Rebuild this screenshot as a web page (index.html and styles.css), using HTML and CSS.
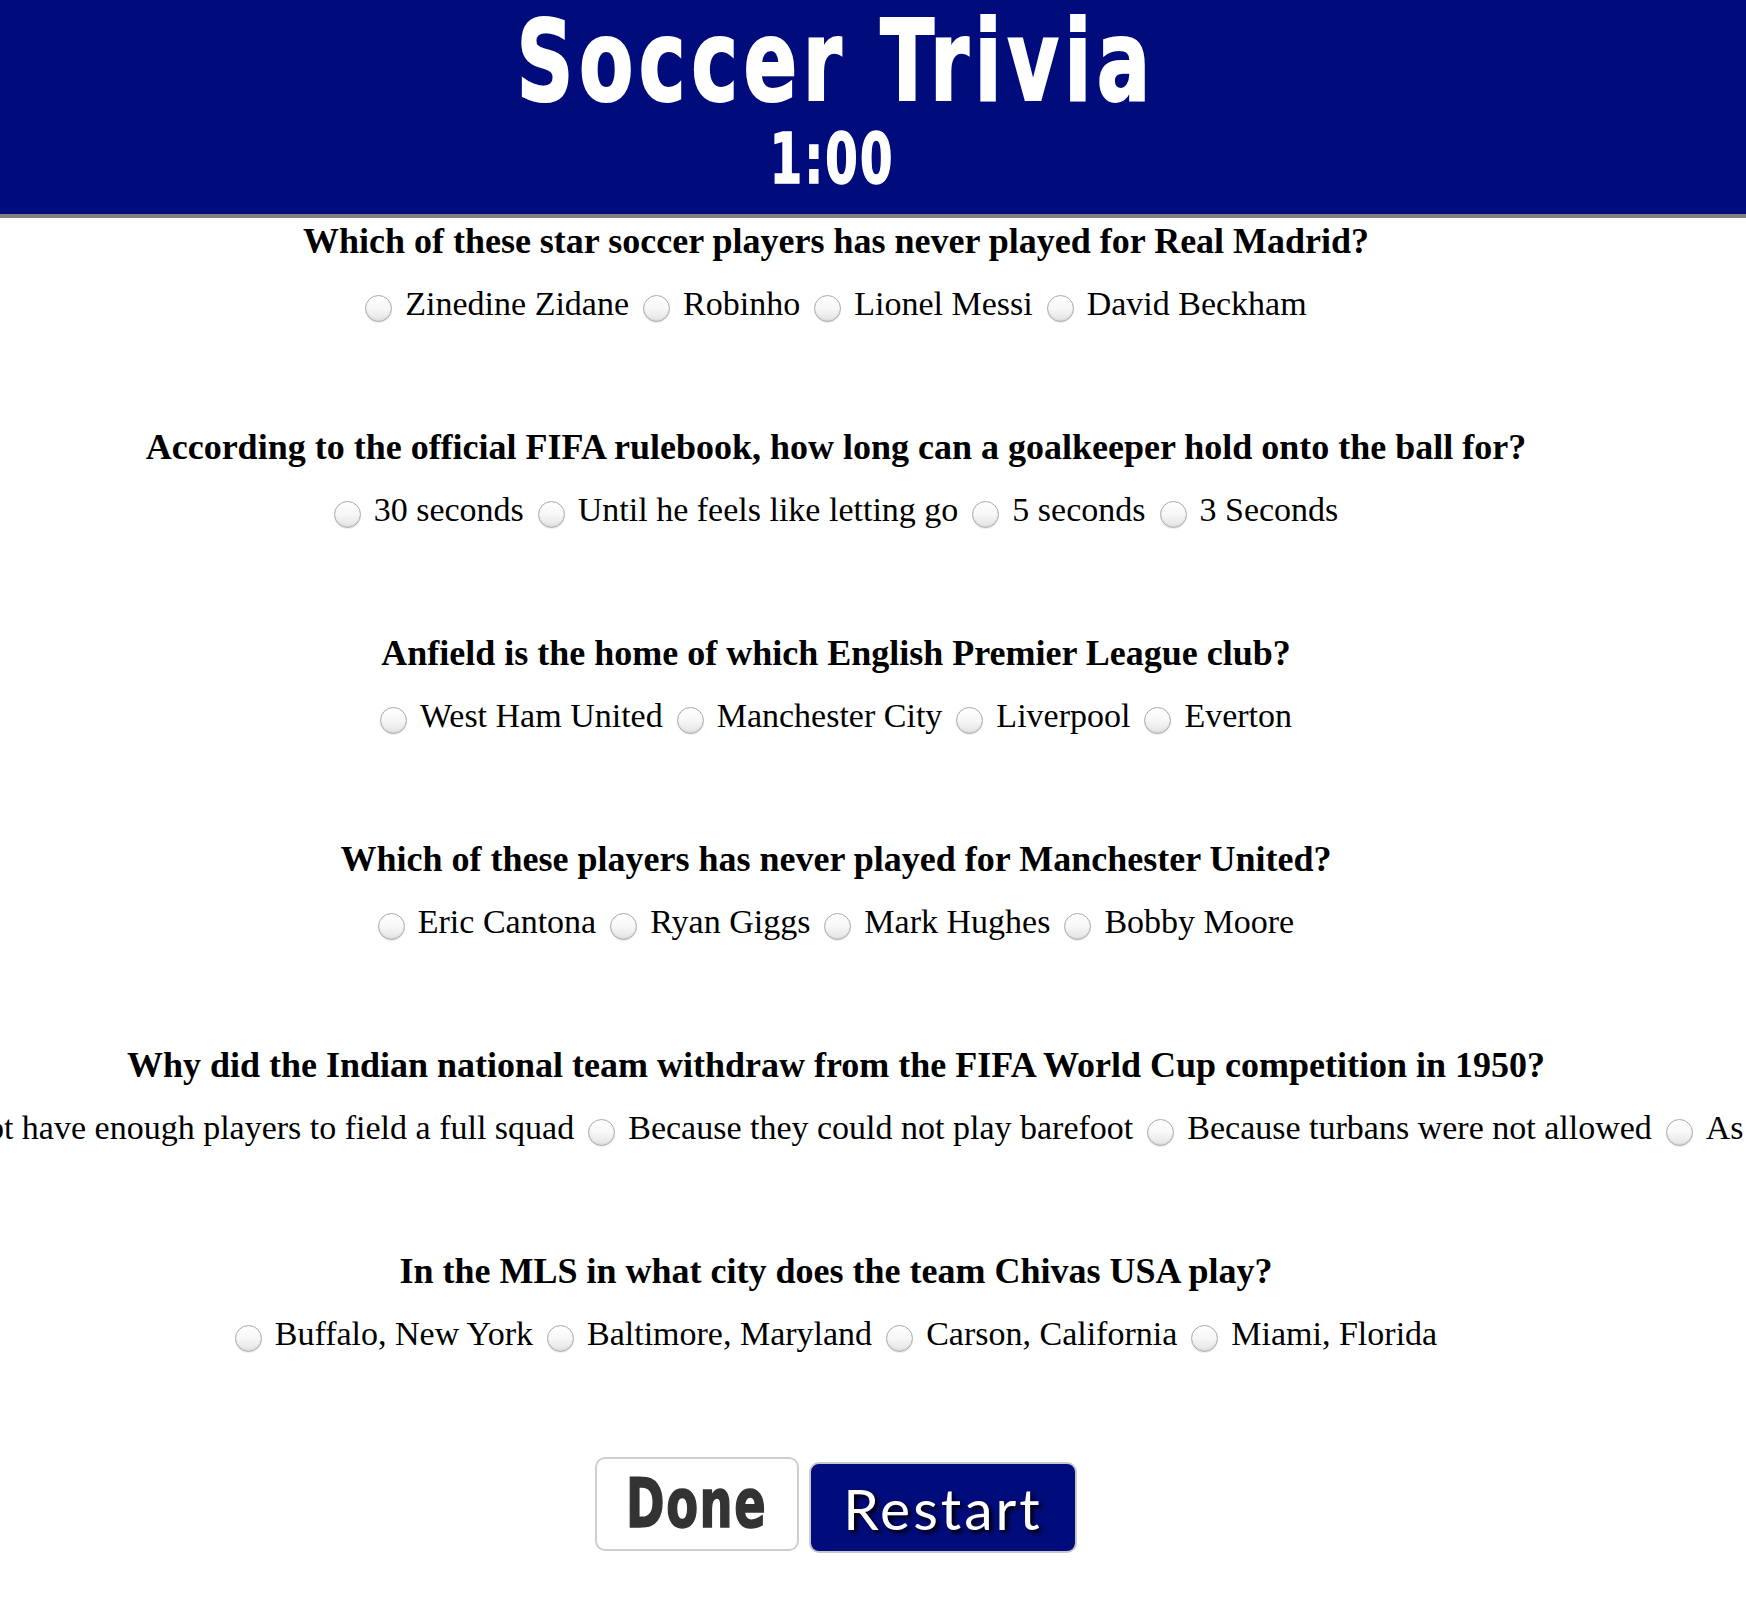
FILE: index.html
```html
<!DOCTYPE html>
<html lang="en">
<head>
<meta charset="utf-8">
<title>Soccer Trivia</title>
<link rel="stylesheet" href="styles.css">
</head>
<body>
<header class="header">
  <div class="header-inner">
    <h1 class="title">Soccer Trivia</h1>
    <div class="timer">1:00</div>
  </div>
</header>
<main class="quiz">
  <section class="question">
    <h2 class="q-text">Which of these star soccer players has never played for Real Madrid?</h2>
    <div class="options">
      <label class="opt"><input type="radio" name="q1" class="radio"><span>Zinedine Zidane</span></label>
      <label class="opt"><input type="radio" name="q1" class="radio"><span>Robinho</span></label>
      <label class="opt"><input type="radio" name="q1" class="radio"><span>Lionel Messi</span></label>
      <label class="opt"><input type="radio" name="q1" class="radio"><span>David Beckham</span></label>
    </div>
  </section>
  <section class="question">
    <h2 class="q-text">According to the official FIFA rulebook, how long can a goalkeeper hold onto the ball for?</h2>
    <div class="options">
      <label class="opt"><input type="radio" name="q2" class="radio"><span>30 seconds</span></label>
      <label class="opt"><input type="radio" name="q2" class="radio"><span>Until he feels like letting go</span></label>
      <label class="opt"><input type="radio" name="q2" class="radio"><span>5 seconds</span></label>
      <label class="opt"><input type="radio" name="q2" class="radio"><span>3 Seconds</span></label>
    </div>
  </section>
  <section class="question">
    <h2 class="q-text">Anfield is the home of which English Premier League club?</h2>
    <div class="options">
      <label class="opt"><input type="radio" name="q3" class="radio"><span>West Ham United</span></label>
      <label class="opt"><input type="radio" name="q3" class="radio"><span>Manchester City</span></label>
      <label class="opt"><input type="radio" name="q3" class="radio"><span>Liverpool</span></label>
      <label class="opt"><input type="radio" name="q3" class="radio"><span>Everton</span></label>
    </div>
  </section>
  <section class="question">
    <h2 class="q-text">Which of these players has never played for Manchester United?</h2>
    <div class="options">
      <label class="opt"><input type="radio" name="q4" class="radio"><span>Eric Cantona</span></label>
      <label class="opt"><input type="radio" name="q4" class="radio"><span>Ryan Giggs</span></label>
      <label class="opt"><input type="radio" name="q4" class="radio"><span>Mark Hughes</span></label>
      <label class="opt"><input type="radio" name="q4" class="radio"><span>Bobby Moore</span></label>
    </div>
  </section>
  <section class="question">
    <h2 class="q-text">Why did the Indian national team withdraw from the FIFA World Cup competition in 1950?</h2>
    <div class="options">
      <label class="opt"><input type="radio" name="q5" class="radio"><span>Because they did not have enough players to field a full squad</span></label>
      <label class="opt"><input type="radio" name="q5" class="radio"><span>Because they could not play barefoot</span></label>
      <label class="opt"><input type="radio" name="q5" class="radio"><span>Because turbans were not allowed</span></label>
      <label class="opt"><input type="radio" name="q5" class="radio"><span>As a protest to FIFA</span></label>
    </div>
  </section>
  <section class="question">
    <h2 class="q-text">In the MLS in what city does the team Chivas USA play?</h2>
    <div class="options">
      <label class="opt"><input type="radio" name="q6" class="radio"><span>Buffalo, New York</span></label>
      <label class="opt"><input type="radio" name="q6" class="radio"><span>Baltimore, Maryland</span></label>
      <label class="opt"><input type="radio" name="q6" class="radio"><span>Carson, California</span></label>
      <label class="opt"><input type="radio" name="q6" class="radio"><span>Miami, Florida</span></label>
    </div>
  </section>
  <div class="buttons">
    <button class="btn btn-done" type="button"><span class="done-label">Done</span></button>
    <button class="btn btn-restart" type="button">Restart</button>
  </div>
</main>
</body>
</html>
```
FILE: styles.css
```css
html, body {
  margin: 0;
  padding: 0;
  overflow-x: hidden;
  background: #ffffff;
}

body {
  font-family: "Liberation Serif", "Times New Roman", serif;
  color: #000000;
  width: 1746px;
}

.header {
  background: #000c7b;
  border-bottom: 4px solid #808080;
  height: 214px;
}

.header-inner {
  width: 1672px;
  padding-top: 7px;
  display: flex;
  flex-direction: column;
  align-items: center;
}

.title {
  margin: 0;
  font-family: "DejaVu Sans Condensed", "DejaVu Sans", sans-serif;
  font-weight: 700;
  font-size: 112px;
  line-height: 108px;
  letter-spacing: 7px;
  color: #ffffff;
  -webkit-text-stroke: 2px #ffffff;
  transform: scaleX(0.785);
}

.timer {
  margin-top: 10px;
  margin-right: 8px;
  font-family: "DejaVu Sans Condensed", "DejaVu Sans", sans-serif;
  font-weight: 700;
  font-size: 69px;
  line-height: 69px;
  letter-spacing: 3px;
  color: #ffffff;
  -webkit-text-stroke: 1.5px #ffffff;
  transform: scaleX(0.75);
}

.quiz {
  width: 1672px;
  display: flex;
  flex-direction: column;
  align-items: center;
  padding-top: 2px;
}

.question {
  width: 1672px;
  display: flex;
  flex-direction: column;
  align-items: center;
  height: 206px;
}

.q-text {
  margin: 0;
  font-size: 36px;
  line-height: 42px;
  font-weight: 700;
  white-space: nowrap;
}

.options {
  margin-top: 21.5px;
  display: flex;
  justify-content: center;
  gap: 14px;
  width: 1672px;
  font-size: 34px;
  line-height: 40px;
  white-space: nowrap;
}

.opt {
  display: inline-flex;
  align-items: center;
  flex: none;
}

.radio {
  appearance: none;
  -webkit-appearance: none;
  width: 27px;
  height: 27px;
  margin: 9px 13px 0 0;
  border-radius: 50%;
  border: 1px solid #aaaaaa;
  background: linear-gradient(to bottom, #ffffff 0%, #f7f7f7 50%, #e4e4e4 100%);
  box-shadow: inset 0 -1px 2px rgba(0,0,0,0.08), 0 1px 1px rgba(0,0,0,0.08);
  flex: none;
}

.buttons {
  display: flex;
  justify-content: center;
  align-items: flex-start;
  gap: 10px;
  margin-top: 1px;
}

.btn {
  margin: 0;
  padding: 0;
  border-radius: 10px;
  cursor: pointer;
}

.btn-done {
  width: 204px;
  height: 94px;
  background: #ffffff;
  border: 2px solid #cfcfcf;
  font-family: "DejaVu Sans Condensed", "DejaVu Sans", sans-serif;
  font-weight: 700;
  font-size: 67px;
  line-height: 90px;
  color: #333333;
}

.done-label {
  display: inline-block;
  transform: scaleX(0.77);
  letter-spacing: 2px;
  -webkit-text-stroke: 1.5px #333333;
}

.btn-restart {
  margin-top: 5px;
  width: 268px;
  height: 91px;
  background: #000c7b;
  border: 2px solid #c8c8c8;
  font-family: Lato, "Open Sans", sans-serif;
  font-weight: 400;
  font-size: 57px;
  letter-spacing: 3px;
  color: #ffffff;
  text-shadow: 3px 3px 4px #000000;
}
```
